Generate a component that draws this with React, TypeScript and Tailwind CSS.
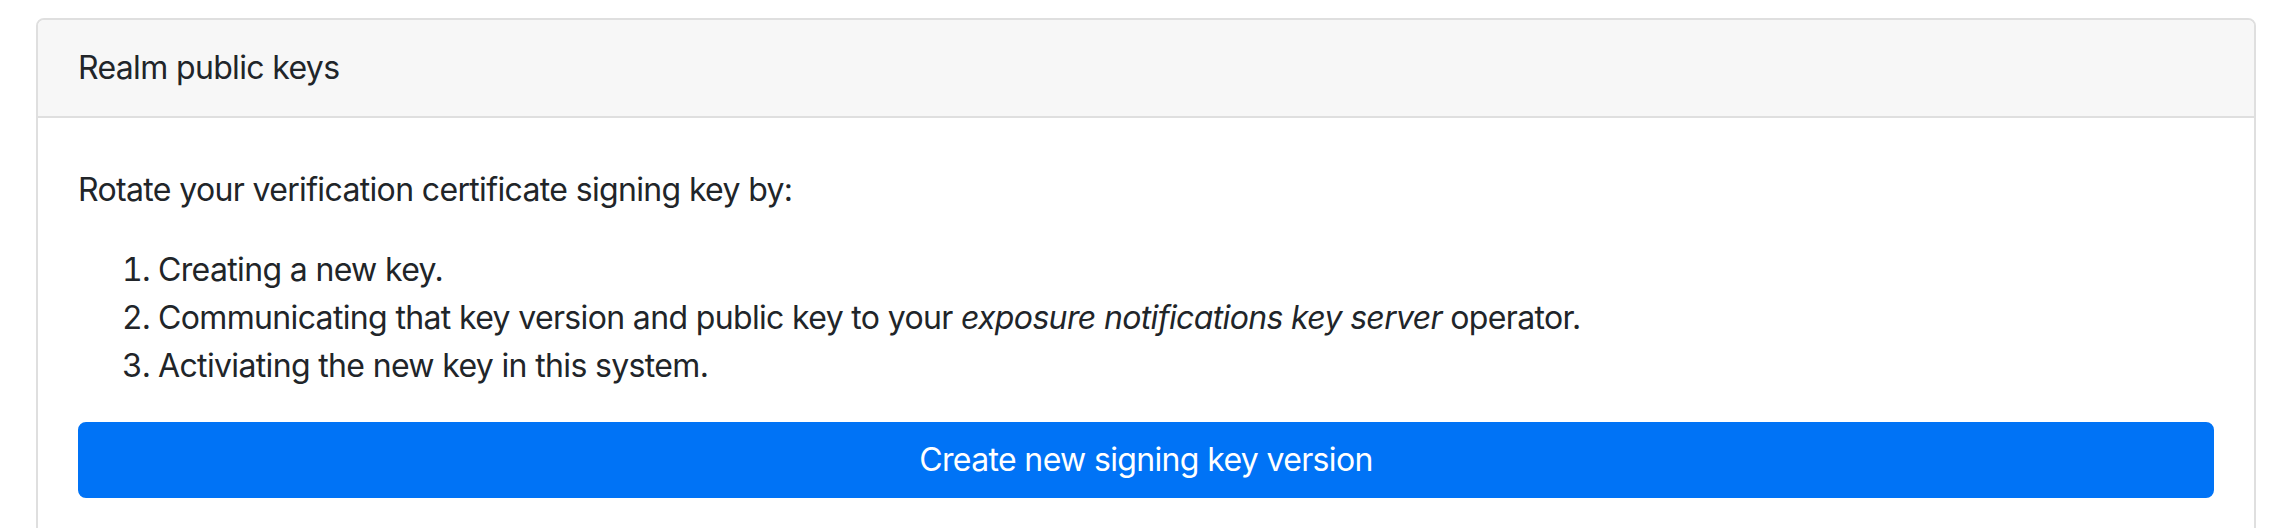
export default function App() {
  return (
    <div className="min-h-screen bg-white pt-[18px] pl-[36px] pr-[28px] font-['Inter','Liberation_Sans',sans-serif] text-[32px] leading-[48px] tracking-[-0.65px] text-[#212529]">
      <div className="rounded-[8px] border-2 border-[#dfdfdf] bg-white">
        <div className="rounded-t-[6px] border-b-2 border-[#dfdfdf] bg-[#f7f7f7] px-[40px] py-[24px]">
          Realm public keys
        </div>
        <div className="px-[40px] pt-[48px] pb-[40px]">
          <p className="mb-[32px]">Rotate your verification certificate signing key by:</p>
          <ol className="mb-[32px] list-decimal pl-[80px]">
            <li>Creating a new key.</li>
            <li>
              Communicating that key version and public key to your{" "}
              <em>exposure notifications key server</em> operator.
            </li>
            <li>Activiating the new key in this system.</li>
          </ol>
          <button
            type="button"
            className="block w-full rounded-[8px] border-2 border-[#0073f6] bg-[#0073f6] px-[24px] py-[12px] text-center text-white"
          >
            Create new signing key version
          </button>
        </div>
      </div>
    </div>
  );
}
